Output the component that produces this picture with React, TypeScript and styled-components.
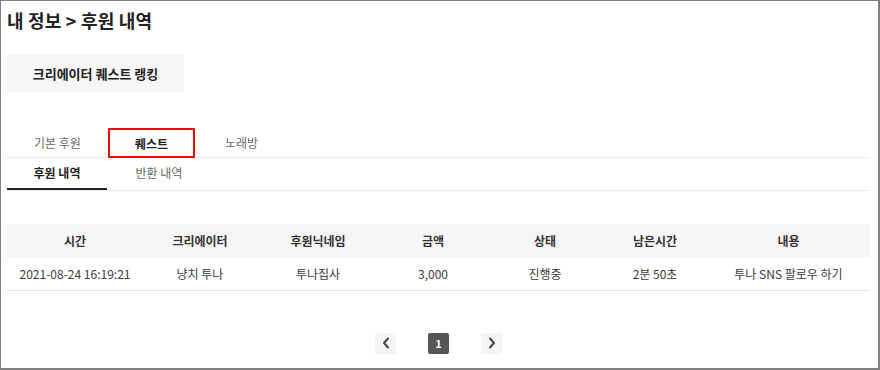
import React from "react";
import styled, { createGlobalStyle } from "styled-components";

const Global = createGlobalStyle`
  html, body { margin: 0; padding: 0; background: #fff; }
  body { font-family: "Noto Sans CJK KR", "Noto Sans", sans-serif; }
  * { box-sizing: border-box; }
`;

const Frame = styled.div`
  width: 880px;
  height: 370px;
  border-style: solid;
  border-color: #808080;
  border-width: 1px 2px 2px 1px;
  padding: 0 8px 0 6px;
  background: #fff;
  overflow: hidden;
`;

const Title = styled.h1`
  margin: 7px 0 0;
  font-size: 18px;
  line-height: 25px;
  font-weight: 700;
  color: #222;
  letter-spacing: 0.2px;
`;

const RankButton = styled.button`
  display: flex;
  align-items: center;
  justify-content: center;
  margin-top: 22px;
  width: 177px;
  height: 37px;
  border: none;
  border-radius: 3px;
  background: #f6f6f6;
  font-family: inherit;
  font-size: 13px;
  font-weight: 700;
  color: #222;
  padding: 0;
`;

const MainTabs = styled.div`
  display: flex;
  margin-top: 36px;
  border-bottom: 1px solid #ececec;
`;

const MainTab = styled.div<{ $active?: boolean; $flagged?: boolean; $last?: boolean }>`
  display: flex;
  align-items: center;
  font-size: 12px;
  color: ${(p) => (p.$active ? "#222" : "#666")};
  font-weight: ${(p) => (p.$active ? 700 : 400)};
  padding: 0 ${(p) => (p.$flagged ? "25px" : "27px")};
  padding-left: ${(p) => (p.$last ? "30px" : undefined)};
  margin-bottom: ${(p) => (p.$flagged ? "-1px" : "0")};
  height: ${(p) => (p.$flagged ? "30px" : "29px")};
  border: ${(p) => (p.$flagged ? "2px solid #ff0000" : "none")};
`;

const SubTabs = styled.div`
  display: flex;
  border-bottom: 1px solid #ececec;
`;

const SubTab = styled.div<{ $active?: boolean }>`
  width: ${(p) => (p.$active ? "100px" : "104px")};
  height: 32px;
  display: flex;
  align-items: center;
  justify-content: center;
  padding-bottom: 2px;
  font-size: 12px;
  color: ${(p) => (p.$active ? "#222" : "#666")};
  font-weight: ${(p) => (p.$active ? 700 : 400)};
  border-bottom: 2px solid ${(p) => (p.$active ? "#222" : "transparent")};
`;

const Table = styled.table`
  margin-top: 33px;
  width: 863px;
  border-collapse: collapse;
  table-layout: fixed;
  font-size: 12px;
`;

const HeadCell = styled.th`
  height: 33px;
  padding: 0;
  background: #f6f6f6;
  font-weight: 700;
  color: #333;
  text-align: center;
`;

const Cell = styled.td`
  height: 33px;
  padding: 0;
  color: #3a3a3a;
  text-align: center;
  border-bottom: 1px solid #e6e6e6;
`;

const Pager = styled.div`
  display: flex;
  justify-content: center;
  gap: 32px;
  margin-top: 42px;
`;

const PageBtn = styled.div<{ $current?: boolean }>`
  width: 21px;
  height: 21px;
  border-radius: 2px;
  display: flex;
  align-items: center;
  justify-content: center;
  background: ${(p) => (p.$current ? "#555" : "#f5f5f5")};
  color: #fff;
  font-size: 11px;
  font-weight: 700;
`;

const Chevron = ({ dir }: { dir: "left" | "right" }) => (
  <svg width="8" height="12" viewBox="0 0 8 12">
    <path
      d={dir === "left" ? "M6 1.5 L2 6 L6 10.5" : "M2 1.5 L6 6 L2 10.5"}
      fill="none"
      stroke="#444"
      strokeWidth="2"
      strokeLinecap="round"
      strokeLinejoin="round"
    />
  </svg>
);

const cols = [136, 114, 122, 108, 116, 104, 163];
const headers = ["시간", "크리에이터", "후원닉네임", "금액", "상태", "남은시간", "내용"];
const row = ["2021-08-24 16:19:21", "냥치 투나", "투나집사", "3,000", "진행중", "2분 50초", "투나 SNS 팔로우 하기"];

export default function App() {
  return (
    <>
      <Global />
      <Frame>
        <Title>내 정보 &gt; 후원 내역</Title>
        <RankButton>크리에이터 퀘스트 랭킹</RankButton>
        <MainTabs>
          <MainTab>기본 후원</MainTab>
          <MainTab $active $flagged>퀘스트</MainTab>
          <MainTab $last>노래방</MainTab>
        </MainTabs>
        <SubTabs>
          <SubTab $active>후원 내역</SubTab>
          <SubTab>반환 내역</SubTab>
        </SubTabs>
        <Table>
          <colgroup>
            {cols.map((w, i) => (
              <col key={i} style={{ width: w }} />
            ))}
          </colgroup>
          <thead>
            <tr>
              {headers.map((h) => (
                <HeadCell key={h}>{h}</HeadCell>
              ))}
            </tr>
          </thead>
          <tbody>
            <tr>
              {row.map((c, i) => (
                <Cell key={i}>{c}</Cell>
              ))}
            </tr>
          </tbody>
        </Table>
        <Pager>
          <PageBtn>
            <Chevron dir="left" />
          </PageBtn>
          <PageBtn $current>1</PageBtn>
          <PageBtn>
            <Chevron dir="right" />
          </PageBtn>
        </Pager>
      </Frame>
    </>
  );
}
